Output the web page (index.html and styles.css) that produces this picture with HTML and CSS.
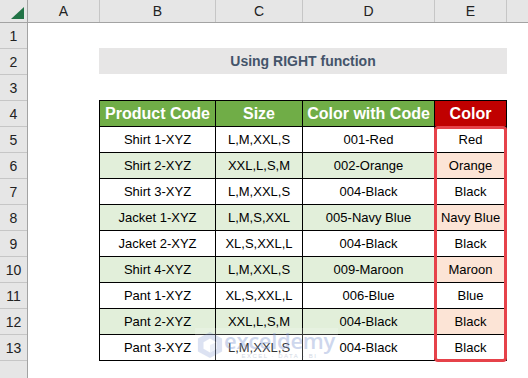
FILE: index.html
```html
<!DOCTYPE html>
<html>
<head>
<meta charset="utf-8">
<link rel="stylesheet" href="styles.css">
</head>
<body>
<div class="sheet">
  <div class="colhead">
    <div class="ch corner">
      <svg class="tri" width="28" height="22" viewBox="0 0 28 22"><polygon points="24,7 24,19 11,19" fill="#217346"/></svg>
    </div>
    <div class="ch wa">A</div>
    <div class="ch wb">B</div>
    <div class="ch wc">C</div>
    <div class="ch wd">D</div>
    <div class="ch we">E</div>
    <div class="ch wf"></div>
  </div>
  <div class="body">
    <div class="rownums">
      <div class="rn">1</div><div class="rn">2</div><div class="rn">3</div><div class="rn">4</div>
      <div class="rn">5</div><div class="rn">6</div><div class="rn">7</div><div class="rn">8</div>
      <div class="rn">9</div><div class="rn">10</div><div class="rn">11</div><div class="rn">12</div>
      <div class="rn">13</div>
    </div>
    <div class="content">
      <div class="title">Using RIGHT function</div>
      <div class="tbl">
        <div class="c hd">Product Code</div><div class="c hd">Size</div><div class="c hd">Color with Code</div><div class="c hd red">Color</div>
        <div class="c">Shirt 1-XYZ</div><div class="c">L,M,XXL,S</div><div class="c">001-Red</div><div class="c">Red</div>
        <div class="c g">Shirt 2-XYZ</div><div class="c g">XXL,L,S,M</div><div class="c g">002-Orange</div><div class="c p">Orange</div>
        <div class="c">Shirt 3-XYZ</div><div class="c">L,M,XXL,S</div><div class="c">004-Black</div><div class="c">Black</div>
        <div class="c g">Jacket 1-XYZ</div><div class="c g">L,M,S,XXL</div><div class="c g">005-Navy Blue</div><div class="c p">Navy Blue</div>
        <div class="c">Jacket 2-XYZ</div><div class="c">XL,S,XXL,L</div><div class="c">004-Black</div><div class="c">Black</div>
        <div class="c g">Shirt 4-XYZ</div><div class="c g">L,M,XXL,S</div><div class="c g">009-Maroon</div><div class="c p">Maroon</div>
        <div class="c">Pant 1-XYZ</div><div class="c">XL,S,XXL,L</div><div class="c">006-Blue</div><div class="c">Blue</div>
        <div class="c g">Pant 2-XYZ</div><div class="c g">XXL,L,S,M</div><div class="c g">004-Black</div><div class="c p">Black</div>
        <div class="c">Pant 3-XYZ</div><div class="c">L,M,XXL,S</div><div class="c">004-Black</div><div class="c">Black</div>
      </div>
      <div class="hilite"></div>
      <div class="watermark">
        <svg class="wm-icon" width="26" height="28" viewBox="0 0 28 30">
          <polygon points="14,1 27,8 27,22 14,29 1,22 1,8" fill="#8fa3d6"/>
          <polygon points="14,8 21,12 21,19 14,23 7,19 7,12" fill="#ffffff"/>
          <polygon points="14,15 21,12 21,19 14,23" fill="#c3cfee"/>
        </svg>
        <div class="wm-text">
          <div class="wm-name">exceldemy</div>
          <div class="wm-sub">EXCEL · DATA · BI</div>
        </div>
      </div>
    </div>
  </div>
</div>
</body>
</html>
```

FILE: styles.css
```css
* { box-sizing: border-box; }
html, body { margin: 0; padding: 0; }
body {
  width: 528px;
  height: 378px;
  overflow: hidden;
  background: #ffffff;
  font-family: "Liberation Sans", Arial, sans-serif;
}
.sheet {
  width: 528px;
  height: 378px;
  display: flex;
  flex-direction: column;
}
.colhead {
  display: flex;
  height: 23px;
  background: #e6e6e6;
  border-bottom: 1px solid #a3a3a3;
  flex: none;
}
.ch {
  height: 22px;
  border-right: 1px solid #c6c6c6;
  display: flex;
  align-items: center;
  justify-content: center;
  font-size: 14px;
  color: #222222;
  flex: none;
}
.corner { width: 28px; border-right-color: #a3a3a3; position: relative; }
.tri { position: absolute; left: 0; top: 0; }
.wa { width: 72px; }
.wb { width: 116px; }
.wc { width: 87px; }
.wd { width: 132px; }
.we { width: 72px; }
.wf { flex: 1; border-right: none; }
.body {
  flex: 1;
  display: flex;
}
.rownums {
  width: 28px;
  flex: none;
  background: #e6e6e6;
  border-right: 1px solid #a3a3a3;
}
.rn {
  height: 26px;
  border-bottom: 1px solid #c6c6c6;
  display: flex;
  align-items: center;
  justify-content: center;
  font-size: 14px;
  color: #222222;
}
.content {
  flex: 1;
  position: relative;
  padding-left: 71px;
  padding-top: 25px;
}
.title {
  width: 408px;
  height: 26px;
  background: #e7e6e6;
  color: #44546a;
  font-weight: bold;
  font-size: 14px;
  display: flex;
  align-items: center;
  justify-content: center;
  margin-bottom: 26px;
}
.tbl {
  display: grid;
  grid-template-columns: 115px 86px 131px 71px;
  grid-auto-rows: 25px;
  gap: 1px;
  background: #000000;
  border: 1px solid #000000;
  width: 408px;
}
.c {
  background: #ffffff;
  display: flex;
  align-items: center;
  justify-content: center;
  font-size: 13px;
  color: #000000;
  white-space: nowrap;
}
.c.hd {
  background: #70ad47;
  color: #ffffff;
  font-weight: bold;
  font-size: 16px;
}
.c.hd.red { background: #c00000; }
.c.g { background: #e2efda; }
.c.p { background: #fce4d6; }
.hilite {
  position: absolute;
  left: 406px;
  top: 103px;
  width: 73px;
  height: 236px;
  border: 3px solid #e6424a;
  border-radius: 4px;
}
.watermark {
  position: absolute;
  left: 167px;
  top: 305px;
  display: flex;
  align-items: center;
  gap: 1px;
  padding: 1px 3px 0 2px;
  background: rgba(255, 255, 255, 0.4);
  opacity: 0.5;
}
.wm-icon { flex: none; opacity: 0.6; }
.wm-text { display: flex; flex-direction: column; align-items: center; }
.wm-name {
  font-family: "Open Sans", sans-serif;
  font-size: 22px;
  line-height: 23px;
  color: #9eb0dc;
  font-weight: 600;
  letter-spacing: -0.3px;
}
.wm-sub {
  font-size: 6px;
  line-height: 8px;
  letter-spacing: 1.5px;
  color: #a8b4cc;
}
```
